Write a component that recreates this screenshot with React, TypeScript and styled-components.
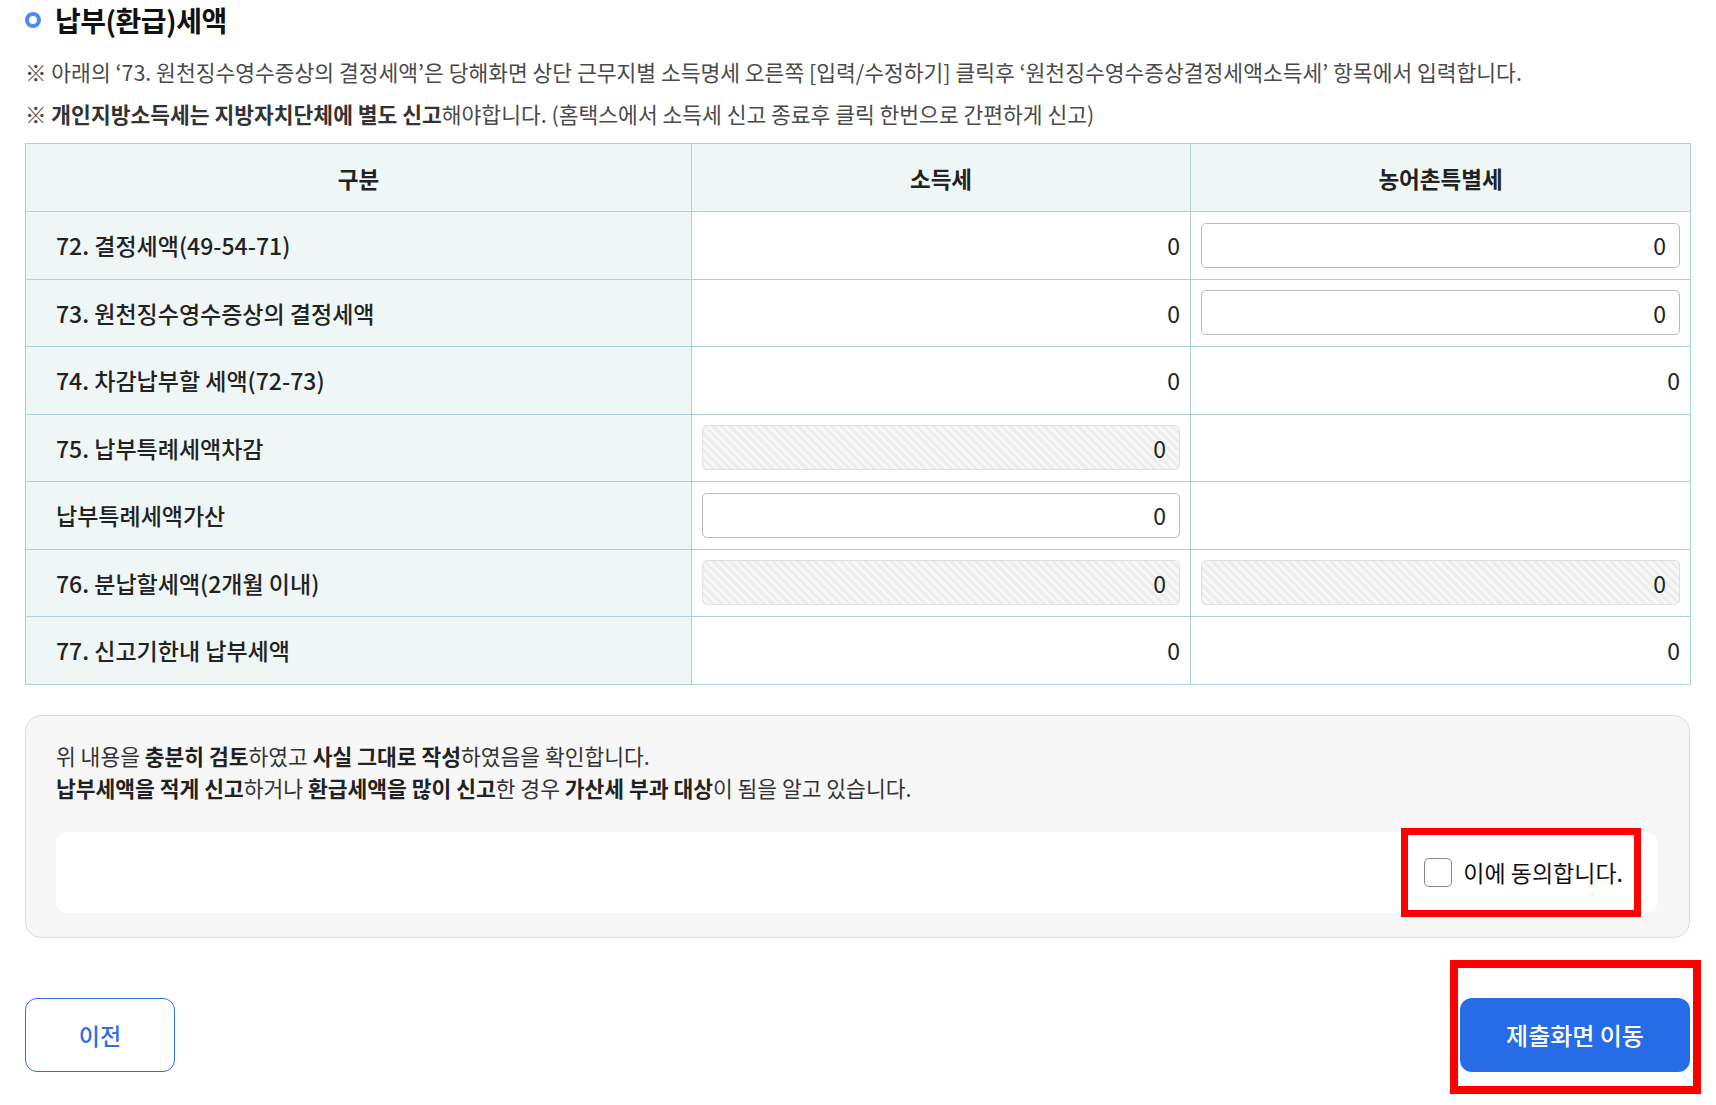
import React, { useState } from 'react';
import styled, { createGlobalStyle } from 'styled-components';

type CellKind = 'text' | 'input' | 'disabled' | 'empty';

interface TaxRow {
  label: string;
  tax: CellKind;
  farm: CellKind;
}

const rows: TaxRow[] = [
  { label: '72. 결정세액(49-54-71)', tax: 'text', farm: 'input' },
  { label: '73. 원천징수영수증상의 결정세액', tax: 'text', farm: 'input' },
  { label: '74. 차감납부할 세액(72-73)', tax: 'text', farm: 'text' },
  { label: '75. 납부특례세액차감', tax: 'disabled', farm: 'empty' },
  { label: '납부특례세액가산', tax: 'input', farm: 'empty' },
  { label: '76. 분납할세액(2개월 이내)', tax: 'disabled', farm: 'disabled' },
  { label: '77. 신고기한내 납부세액', tax: 'text', farm: 'text' },
];

const GlobalStyle = createGlobalStyle`
  body {
    margin: 0;
    background: #fff;
    font-family: 'Noto Sans CJK KR', 'Noto Sans', sans-serif;
    color: #222;
  }
`;

const ValueCell = ({ kind }: { kind: CellKind }) => {
  if (kind === 'empty') return <Td />;
  if (kind === 'text')
    return (
      <Td>
        <PlainValue>0</PlainValue>
      </Td>
    );
  return (
    <Td>
      <NumberInput defaultValue="0" disabled={kind === 'disabled'} readOnly={kind === 'disabled'} />
    </Td>
  );
};

const App = () => {
  const [agreed, setAgreed] = useState(false);

  return (
    <Page>
      <GlobalStyle />
      <TitleRow>
        <Ring />
        <Title>납부(환급)세액</Title>
      </TitleRow>
      <Notes>
        <Note>
          ※ 아래의 ‘73. 원천징수영수증상의 결정세액’은 당해화면 상단 근무지별 소득명세 오른쪽 [입력/수정하기] 클릭후
          ‘원천징수영수증상결정세액소득세’ 항목에서 입력합니다.
        </Note>
        <Note>
          ※ <b>개인지방소득세는 지방자치단체에 별도 신고</b>해야합니다. (홈택스에서 소득세 신고 종료후 클릭 한번으로
          간편하게 신고)
        </Note>
      </Notes>

      <Table>
        <colgroup>
          <col style={{ width: 666 }} />
          <col style={{ width: 499 }} />
          <col style={{ width: 500 }} />
        </colgroup>
        <thead>
          <tr>
            <Th>구분</Th>
            <Th>소득세</Th>
            <Th>농어촌특별세</Th>
          </tr>
        </thead>
        <tbody>
          {rows.map(row => (
            <tr key={row.label}>
              <LabelCell>{row.label}</LabelCell>
              <ValueCell kind={row.tax} />
              <ValueCell kind={row.farm} />
            </tr>
          ))}
        </tbody>
      </Table>

      <ConfirmBox>
        <ConfirmText>
          위 내용을 <b>충분히 검토</b>하였고 <b>사실 그대로 작성</b>하였음을 확인합니다.
        </ConfirmText>
        <ConfirmText>
          <b>납부세액을 적게 신고</b>하거나 <b>환급세액을 많이 신고</b>한 경우 <b>가산세 부과 대상</b>이 됨을 알고
          있습니다.
        </ConfirmText>
        <AgreeBar>
          <AgreeLabel>
            <Check type="checkbox" checked={agreed} onChange={e => setAgreed(e.target.checked)} />
            이에 동의합니다.
          </AgreeLabel>
        </AgreeBar>
      </ConfirmBox>

      <ButtonRow>
        <PrevButton>이전</PrevButton>
        <Highlight $inset="-38px -11px -22px -10px">
          <SubmitButton>제출화면 이동</SubmitButton>
        </Highlight>
      </ButtonRow>
    </Page>
  );
};

export default App;

const Page = styled.div`
  width: 1690px;
  min-height: 1105px;
  box-sizing: border-box;
  padding: 0 0 0 25px;
`;

const TitleRow = styled.div`
  display: flex;
  align-items: center;
  height: 40px;
`;

const Ring = styled.span`
  width: 16px;
  height: 16px;
  border: 4px solid #4a8cf3;
  border-radius: 50%;
  box-sizing: border-box;
  margin-right: 14px;
`;

const Title = styled.h2`
  margin: 0;
  font-size: 28px;
  font-weight: 700;
  color: #111;
  letter-spacing: -0.5px;
`;

const Notes = styled.div`
  margin-top: 17px;
  display: flex;
  flex-direction: column;
  gap: 13px;
  margin-bottom: 15px;
`;

const Note = styled.p`
  margin: 0;
  font-size: 21.5px;
  line-height: 29px;
  color: #4a4a4a;
  b {
    color: #333;
    font-weight: 700;
  }
`;

const Table = styled.table`
  width: 1665px;
  border-collapse: collapse;
  table-layout: fixed;
  border: 1px solid #a9d3d8;
`;

const Th = styled.th`
  height: 67px;
  background: #eef7f6;
  border: 1px solid #a9d3d8;
  font-size: 22.5px;
  font-weight: 700;
  color: #222;
  padding: 0;
`;

const LabelCell = styled.td`
  height: 66.5px;
  background: #eef7f6;
  border: 1px solid #a9d3d8;
  padding: 0 0 0 30px;
  font-size: 23px;
  font-weight: 500;
  color: #222;
`;

const Td = styled.td`
  height: 66.5px;
  border: 1px solid #a9d3d8;
  padding: 0 10px;
  text-align: right;
`;

const PlainValue = styled.span`
  font-size: 23px;
  color: #222;
`;

const NumberInput = styled.input`
  display: block;
  width: 100%;
  height: 45px;
  box-sizing: border-box;
  border: 1px solid #bbb;
  border-radius: 5px;
  padding: 0 13px;
  text-align: right;
  font-family: inherit;
  font-size: 23px;
  color: #222;
  background: #fff;
  outline: none;

  &:disabled {
    border-color: #e0e0e0;
    color: #222;
    -webkit-text-fill-color: #222;
    opacity: 1;
    background: repeating-linear-gradient(45deg, #ededed 0 3px, #f7f7f7 3px 6px);
  }
`;

const ConfirmBox = styled.div`
  margin-top: 30px;
  background: #f7f7f7;
  border: 1px solid #dcdcdc;
  border-radius: 16px;
  padding: 24px 31px 24px 30px;
`;

const ConfirmText = styled.p`
  margin: 0;
  font-size: 21.5px;
  line-height: 32px;
  color: #333;
  b {
    color: #222;
    font-weight: 700;
  }
`;

const AgreeBar = styled.div`
  margin-top: 28px;
  height: 81px;
  background: #fff;
  border-radius: 12px;
  display: flex;
  align-items: center;
  justify-content: flex-end;
  padding-right: 35px;
`;

const AgreeLabel = styled.label`
  position: relative;
  display: flex;
  align-items: center;
  gap: 11px;
  font-size: 23px;
  color: #111;
  cursor: pointer;

  &::after {
    content: '';
    position: absolute;
    inset: -27px -18px -28px -23px;
    border: 7px solid #ff0000;
    pointer-events: none;
  }
`;

const Check = styled.input`
  appearance: none;
  width: 28px;
  height: 29px;
  margin: 0;
  border: 1px solid #888;
  border-radius: 5px;
  background: #fff;
  cursor: pointer;

  &:checked {
    background: #256ce6;
    border-color: #256ce6;
  }
`;

const ButtonRow = styled.div`
  margin-top: 60px;
  display: flex;
  justify-content: space-between;
  align-items: center;
`;

const Highlight = styled.div<{ $inset: string }>`
  position: relative;

  &::after {
    content: '';
    position: absolute;
    inset: ${p => p.$inset};
    border: 8px solid #ff0000;
    pointer-events: none;
  }
`;

const BaseButton = styled.button`
  height: 74px;
  border-radius: 12px;
  font-family: inherit;
  font-size: 23px;
  cursor: pointer;
`;

const PrevButton = styled(BaseButton)`
  width: 150px;
  background: #fff;
  border: 1.5px solid #2f6fe0;
  color: #2f6fe0;
  font-weight: 500;
`;

const SubmitButton = styled(BaseButton)`
  display: block;
  width: 230px;
  background: #256ce6;
  border: none;
  color: #fff;
  font-weight: 500;
  font-size: 24px;
`;
